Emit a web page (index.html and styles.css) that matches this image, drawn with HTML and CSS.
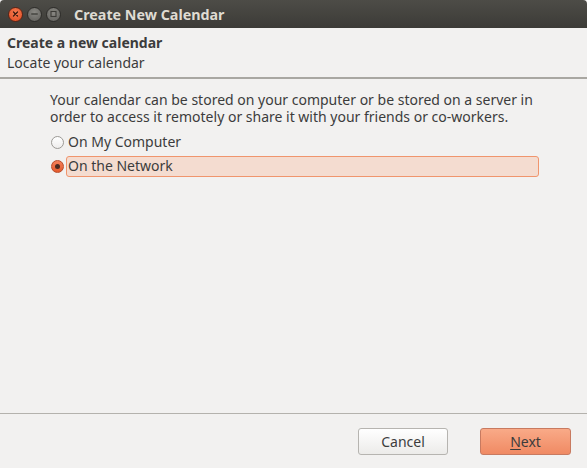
FILE: index.html
```html
<!DOCTYPE html>
<html>
<head>
<meta charset="utf-8">
<link rel="stylesheet" href="styles.css">
</head>
<body>
<div class="window">
  <div class="titlebar">
    <div class="wbtns">
      <span class="wbtn close"><svg width="14" height="14" viewBox="0 0 14 14"><path d="M4.8 4.8 L9.2 9.2 M9.2 4.8 L4.8 9.2" stroke="#3a1a10" stroke-width="1.3" stroke-linecap="round"/></svg></span>
      <span class="wbtn"><svg width="14" height="14" viewBox="0 0 14 14"><path d="M3.5 7 H10.5" stroke="#3c3b37" stroke-width="1.4"/></svg></span>
      <span class="wbtn"><svg width="14" height="14" viewBox="0 0 14 14"><rect x="4.3" y="4.3" width="5.4" height="5.4" fill="none" stroke="#3c3b37" stroke-width="1.2"/></svg></span>
    </div>
    <div class="title">Create New Calendar</div>
  </div>
  <div class="header">
    <div class="h-title">Create a new calendar</div>
    <div class="h-sub">Locate your calendar</div>
  </div>
  <div class="content">
    <p class="desc">Your calendar can be stored on your computer or be stored on a server in order to access it remotely or share it with your friends or co-workers.</p>
    <div class="radio-row">
      <span class="radio"></span>
      <span class="label">On My Computer</span>
    </div>
    <div class="radio-row">
      <span class="radio checked"></span>
      <span class="label focused">On the Network</span>
    </div>
  </div>
  <div class="footer">
    <button class="btn">Cancel</button>
    <button class="btn primary"><u>N</u>ext</button>
  </div>
</div>
</body>
</html>
```
FILE: styles.css
```css
* { box-sizing: border-box; }
html, body { margin: 0; padding: 0; }
body {
  width: 587px;
  height: 468px;
  background: #f2f1f0;
  font-family: "Noto Sans", "DejaVu Sans", sans-serif;
  color: #3c3c3c;
  font-size: 14px;
  overflow: hidden;
}
.window { display: flex; flex-direction: column; height: 468px; }
.titlebar {
  height: 28px;
  background: linear-gradient(#4d4c47, #3c3b37);
  display: flex;
  align-items: center;
  padding-left: 8px;
  border-radius: 4px 4px 0 0;
}
.wbtns { display: flex; gap: 4px; }
.wbtn {
  width: 15px; height: 15px;
  border-radius: 50%;
  background: radial-gradient(circle at 50% 35%, #8a8984, #5e5d59);
  border: 1px solid #2e2d2a;
  display: flex; align-items: center; justify-content: center;
}
.wbtn svg { display: block; }
.wbtn.close { background: radial-gradient(circle at 50% 35%, #f57d52, #e0491f); border-color: #5a2416; }
.title {
  margin-left: 13px;
  color: #dfdbd2;
  font-weight: bold;
  font-size: 14.3px;
}
.header {
  height: 51px;
  padding: 5px 7px 0;
  border-bottom: 2px solid #a9a7a2;
  display: flex; flex-direction: column;
  line-height: 20px;
}
.h-title { font-weight: bold; }
.content {
  flex: 1;
  padding: 12px 40px 0 50px;
  border-bottom: 1px solid #b4b2ad;
}
.desc { margin: 0 0 5px; line-height: 17px; }
.radio-row {
  display: flex; align-items: center;
  height: 24px;
  margin-left: 1px;
  margin-right: 10px;
}
.radio {
  width: 13px; height: 13px;
  border-radius: 50%;
  border: 1px solid #9c9a96;
  background: linear-gradient(#ffffff, #eeedec);
  margin-right: 3px;
  flex: none;
  display: flex; align-items: center; justify-content: center;
}
.radio.checked {
  background: linear-gradient(#f4805a, #e45a2c);
  border-color: #b84c2b;
}
.radio.checked::after {
  content: "";
  width: 5px; height: 5px; border-radius: 50%;
  background: #4a2a20;
}
.label { padding: 0 1px; line-height: 18px; }
.label.focused {
  flex: 1;
  background: #f4dcd0;
  border: 1px solid #f0956d;
  border-radius: 3px;
  line-height: 18px;
  height: 21px;
  margin-left: -1px;
  margin-right: -2px;
}
.footer {
  height: 54px;
  display: flex;
  justify-content: flex-end;
  align-items: flex-start;
  gap: 32px;
  padding: 14px 16px 0 0;
}
.btn {
  width: 90px; height: 27px;
  font-family: inherit;
  font-size: 14px;
  color: #3c3c3c;
  border-radius: 3px;
  border: 1px solid #b6b4b0;
  background: linear-gradient(#ffffff, #ecebe9);
  padding: 0;
}
.btn.primary {
  width: 91px;
  background: linear-gradient(#f9aa88, #f08a63);
  border-color: #c87a60;
}
.btn u { text-decoration-thickness: 1px; text-underline-offset: 2px; }
```
